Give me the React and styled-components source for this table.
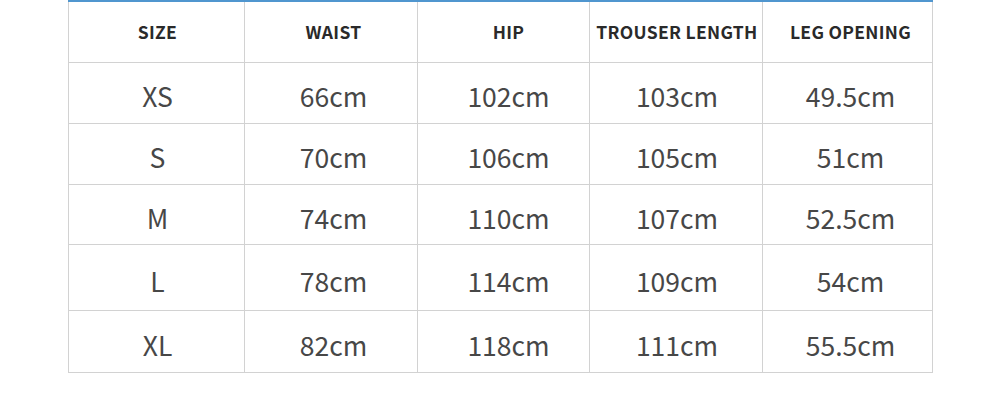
import React from "react";
import styled, { createGlobalStyle } from "styled-components";

const Global = createGlobalStyle`
  html, body { margin: 0; padding: 0; background: #fff; }
  body { font-family: "Noto Sans CJK SC", "Noto Sans", sans-serif; }
`;

const Page = styled.div`
  width: 1000px;
  height: 400px;
  padding-left: 68px;
  box-sizing: border-box;
`;

const Table = styled.table`
  border-collapse: collapse;
  table-layout: fixed;
  width: 864px;
  border-top: 2px solid #5096cf;
`;

const Cell = styled.td`
  border: 1px solid #d2d2d2;
  border-top: ${(p) => (p.$first ? "none" : "1px solid #d2d2d2")};
  text-align: center;
  vertical-align: middle;
  padding: 6px 0 0 ${(p) => p.$shift || 0}px;
  color: #474747;
  font-size: 26.5px;
  font-weight: 400;
  white-space: nowrap;
`;

const Head = styled(Cell).attrs({ as: "th" })`
  padding: 0 0 0 ${(p) => p.$shift || 0}px;
  color: #2a2a2a;
  font-size: 17.5px;
  font-weight: 700;
  letter-spacing: 0.3px;
`;

const Row = styled.tr`
  height: ${(p) => p.$h}px;
`;

const cols = [176, 173, 172, 173, 170];
const shifts = [2, 5, 10, 2, 6];
const heads = ["SIZE", "WAIST", "HIP", "TROUSER LENGTH", "LEG OPENING"];
const rows = [
  { h: 61, v: ["XS", "66cm", "102cm", "103cm", "49.5cm"] },
  { h: 61, v: ["S", "70cm", "106cm", "105cm", "51cm"] },
  { h: 60, v: ["M", "74cm", "110cm", "107cm", "52.5cm"] },
  { h: 66, v: ["L", "78cm", "114cm", "109cm", "54cm"] },
  { h: 62, v: ["XL", "82cm", "118cm", "111cm", "55.5cm"] },
];

export default function App() {
  return (
    <Page>
      <Global />
      <Table>
        <colgroup>
          {cols.map((w, i) => (
            <col key={i} style={{ width: w }} />
          ))}
        </colgroup>
        <thead>
          <Row $h={61}>
            {heads.map((h, i) => (
              <Head key={h} $first $shift={shifts[i]}>
                {h}
              </Head>
            ))}
          </Row>
        </thead>
        <tbody>
          {rows.map((r) => (
            <Row key={r.v[0]} $h={r.h}>
              {r.v.map((c, i) => (
                <Cell key={i} $shift={shifts[i]}>
                  {c}
                </Cell>
              ))}
            </Row>
          ))}
        </tbody>
      </Table>
    </Page>
  );
}
